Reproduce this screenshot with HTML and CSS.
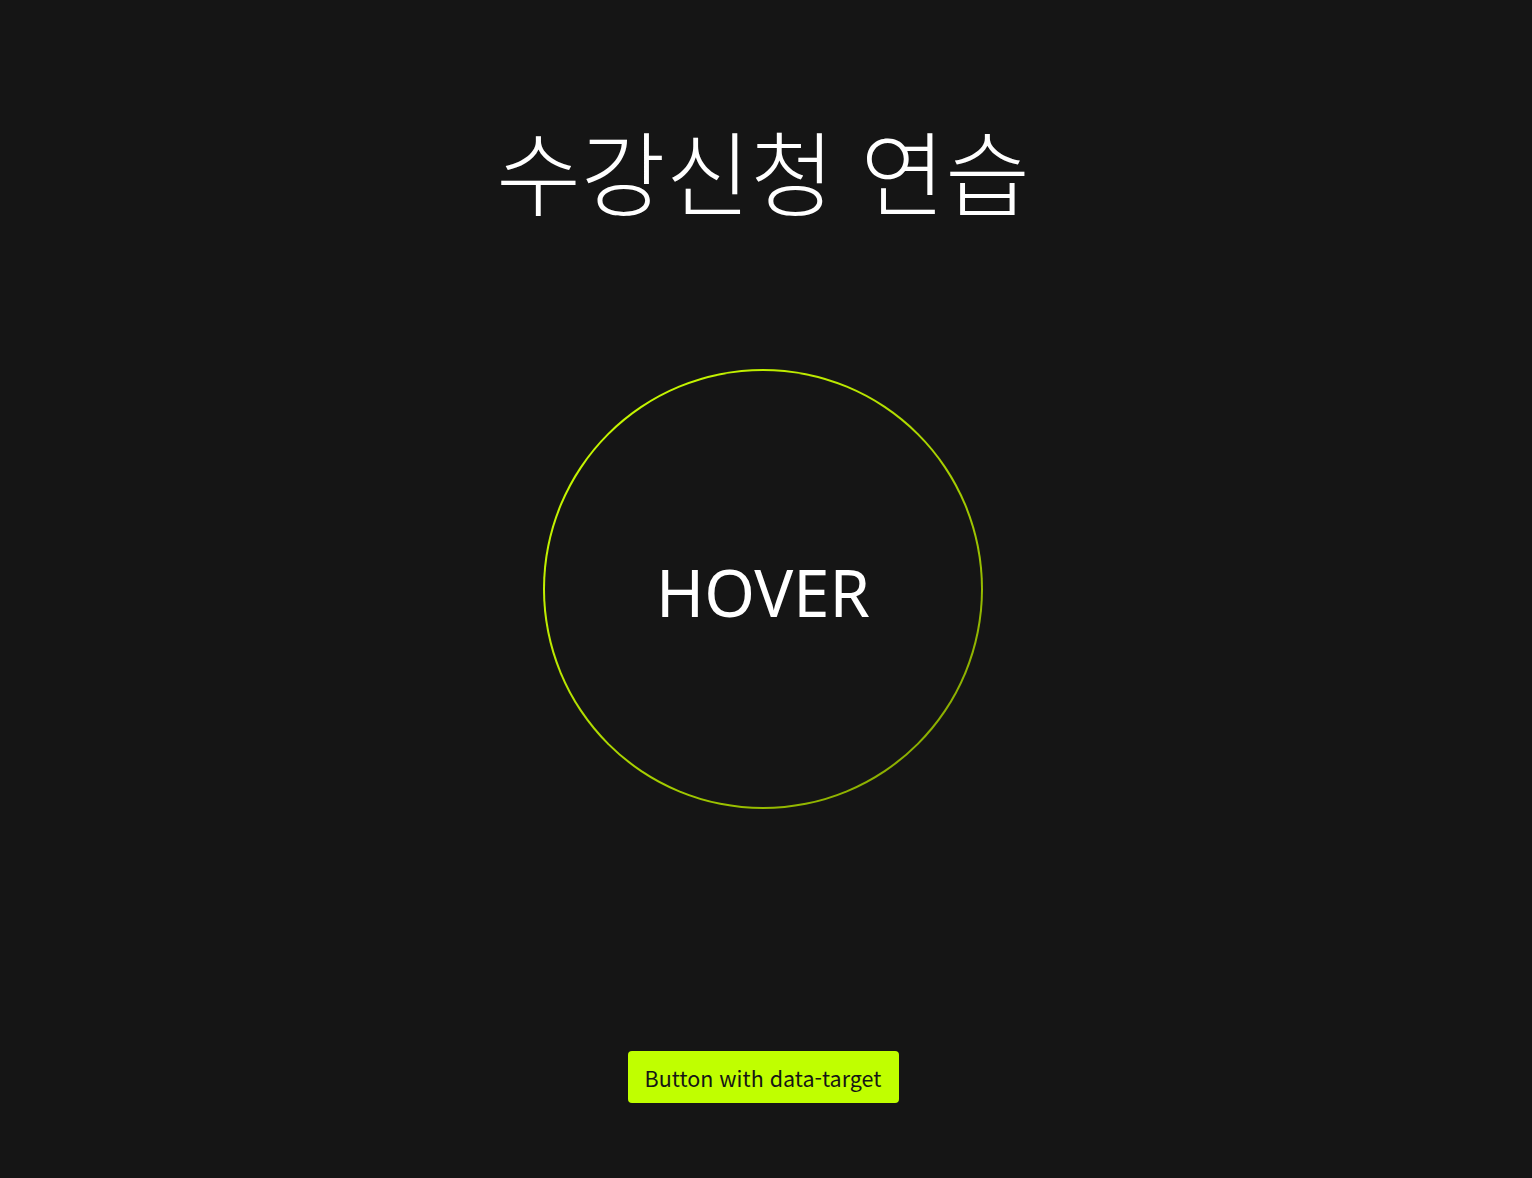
FILE: index.html
```html
<!DOCTYPE html>
<html lang="ko">
<head>
<meta charset="utf-8">
<title>수강신청 연습</title>
<link rel="stylesheet" href="styles.css">
</head>
<body>
<main class="page">
  <h1 class="title">수강신청 연습</h1>
  <div class="ring"><span class="ring-label">HOVER</span></div>
  <button class="target-btn" type="button" data-target="ring">Button with data-target</button>
</main>
</body>
</html>
```
FILE: styles.css
```css
html, body {
  margin: 0;
  padding: 0;
  background: #151515;
  height: 100%;
}
body {
  font-family: "Noto Sans CJK KR", "Noto Sans", sans-serif;
  color: #ffffff;
}
.page {
  display: flex;
  flex-direction: column;
  align-items: center;
  padding-top: 106px;
  padding-right: 6px;
}
.title {
  margin: 0;
  font-size: 92px;
  font-weight: 300;
  line-height: 126px;
  letter-spacing: 0;
}
.ring {
  margin-top: 137px;
  width: 440px;
  height: 440px;
  box-sizing: border-box;
  border-radius: 50%;
  border: 2px solid transparent;
  background:
    linear-gradient(#151515, #151515) padding-box,
    linear-gradient(135deg, #ccff00 0%, #bbe800 35%, #7f9f00 100%) border-box;
  display: flex;
  align-items: center;
  justify-content: center;
}
.ring-label {
  font-family: "Noto Sans", sans-serif;
  font-size: 65px;
  line-height: 1;
  margin-top: 6px;
}
.target-btn {
  margin-top: 242px;
  width: 271px;
  height: 52px;
  border: none;
  border-radius: 4px;
  background: #c0ff00;
  color: #151515;
  font-family: "Noto Sans CJK KR", "Noto Sans", sans-serif;
  font-size: 21.5px;
  padding: 0;
  cursor: pointer;
}
```
